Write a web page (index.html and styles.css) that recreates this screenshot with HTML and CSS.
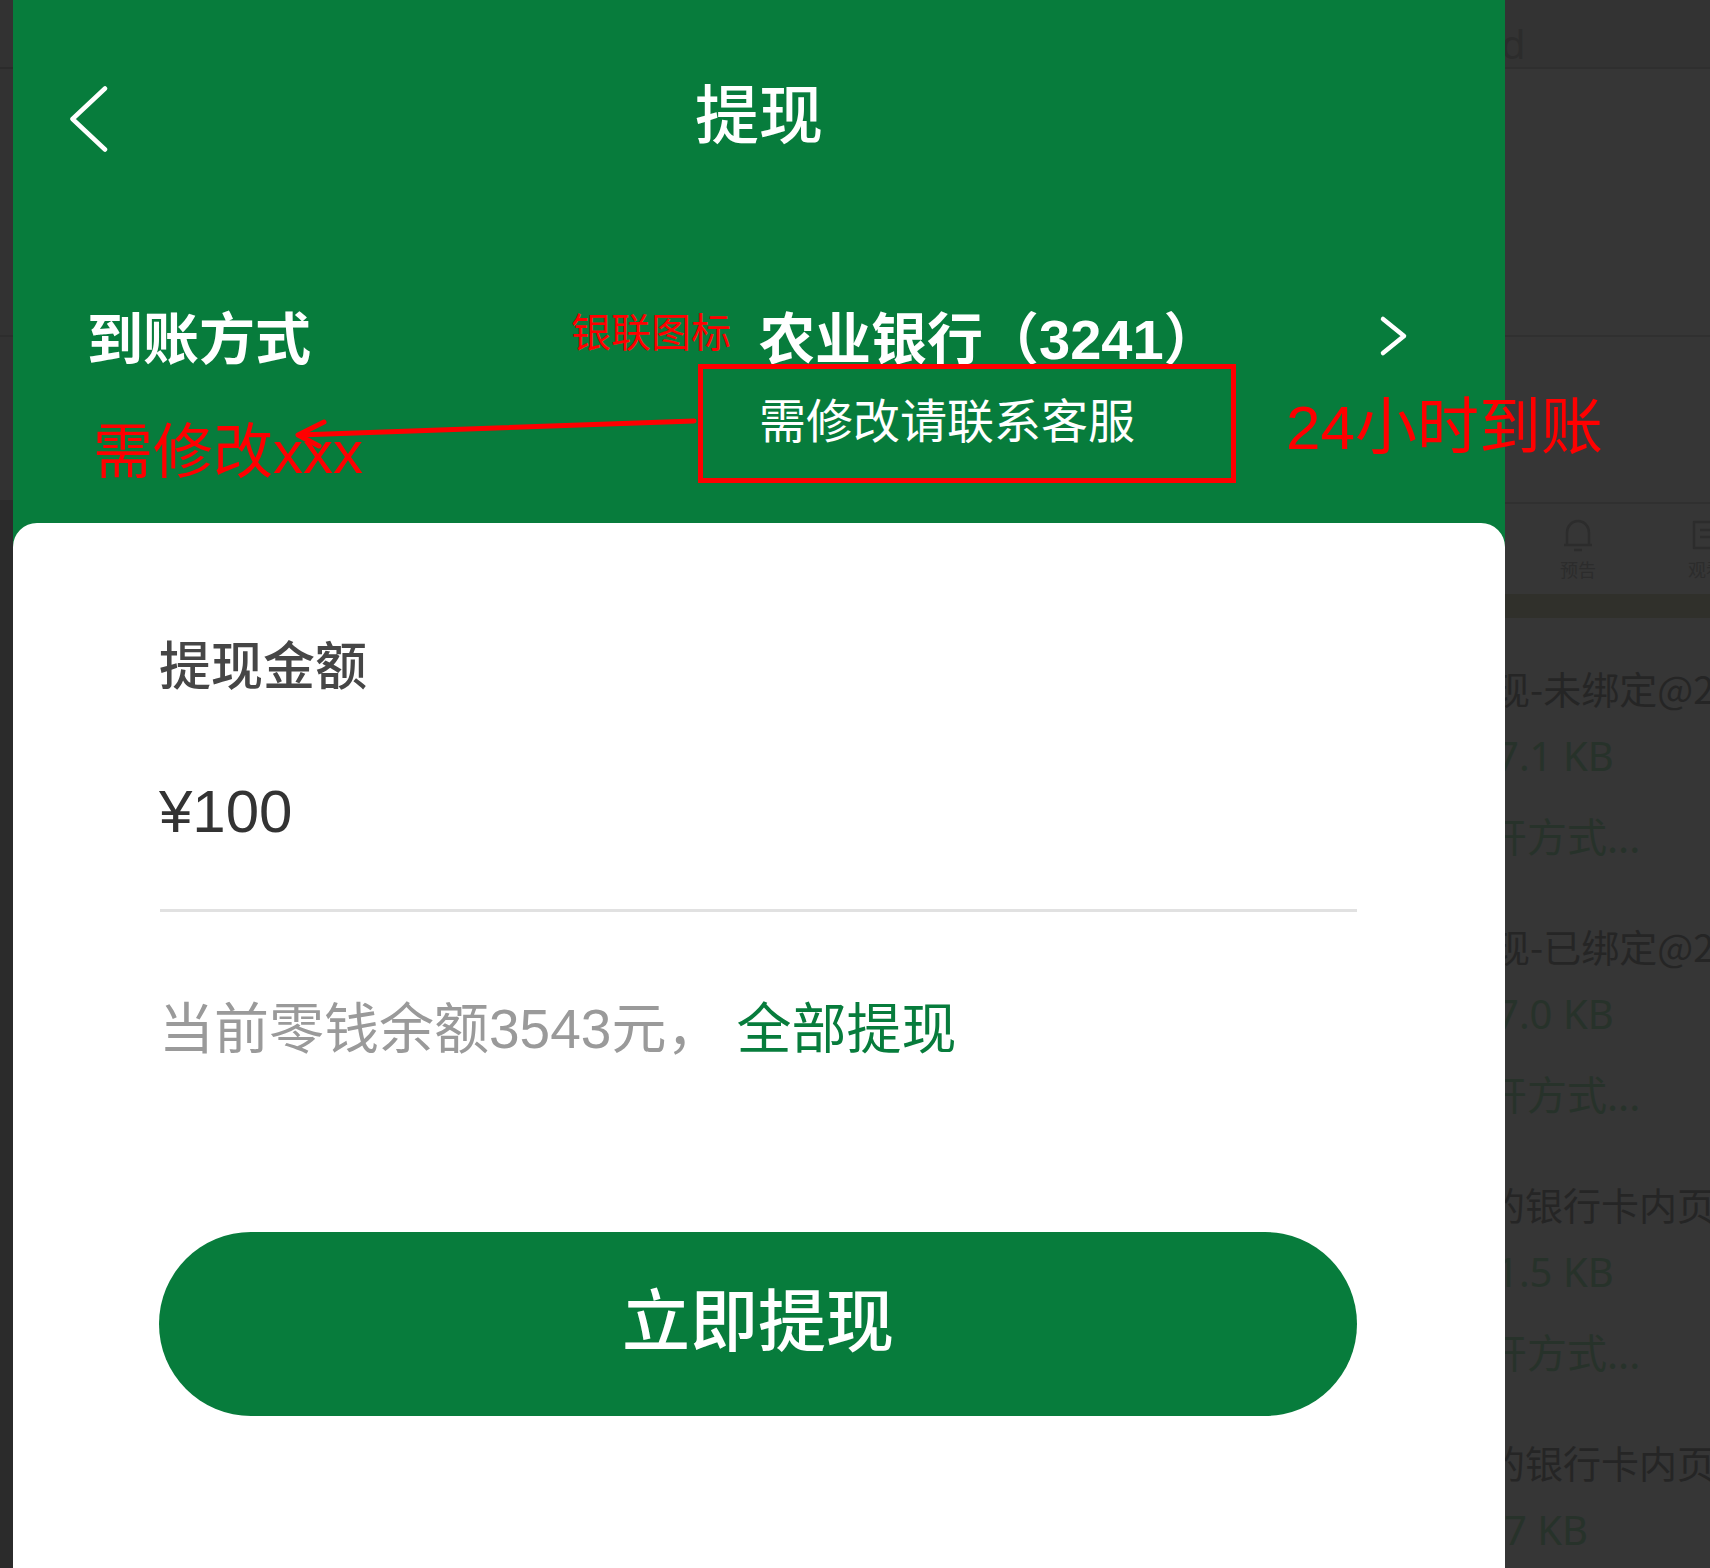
FILE: index.html
```html
<!DOCTYPE html>
<html lang="zh-CN">
<head>
<meta charset="utf-8">
<title>提现</title>
<link rel="stylesheet" href="styles.css">
</head>
<body>
<div class="stage">
  <div class="edge">
    <div class="edge-top"></div>
    <div class="edge-mid"></div>
    <div class="edge-low"></div>
    <div class="edge-bottom"></div>
  </div>

  <main class="phone">
    <header class="nav">
      <button class="back" type="button" aria-label="返回">
        <svg viewBox="0 0 40 66" width="40" height="66"><path d="M36 2.5 L3.5 33 L36 63.5"/></svg>
      </button>
      <h1 class="title">提现</h1>
    </header>

    <section class="method">
      <div class="method-row">
        <span class="method-label">到账方式</span>
        <span class="note note-icon">银联图标</span>
        <span class="bank">农业银行（<span class="lat">3241</span>）</span>
        <svg class="chev" viewBox="0 0 30 42" width="30" height="42"><path d="M5 4 L26 21 L5 38"/></svg>
      </div>
      <div class="method-sub">
        <span class="note note-left">需修改<span class="lat">xxx</span></span>
        <div class="note-box"><span class="bank-sub">需修改请联系客服</span></div>
        <span class="note note-right"><span class="lat">24</span>小时到账</span>
      </div>
      <svg class="note-arrow" viewBox="0 0 1492 297" width="1492" height="297">
        <path class="shaft" d="M286 209 L681 195"/>
        <path class="head" d="M311 196 L285 209 L306 220"/>
      </svg>
    </section>

    <section class="card">
      <h2 class="amount-label">提现金额</h2>
      <div class="amount">¥100</div>
      <div class="divider"></div>
      <p class="balance">当前零钱余额<span class="lat">3543</span>元，<a class="all">全部提现</a></p>
      <button class="submit" type="button">立即提现</button>
    </section>
  </main>

  <aside class="backdrop">
    <div class="bd-top"><span class="bd-d">d</span></div>
    <div class="bd-sec"></div>
    <div class="bd-sec2"></div>
    <div class="bd-tabs">
      <div class="bd-tab">
        <svg viewBox="0 0 32 36" width="32" height="36"><path d="M5 27 L5 15 C5 8 10 3 16 3 C22 3 27 8 27 15 L27 27 Z M2 27 L30 27 M12 32 L20 32"/></svg>
        <span>预告</span>
      </div>
      <div class="bd-tab">
        <svg viewBox="0 0 32 36" width="32" height="36"><path d="M4 4 L28 4 L28 30 L4 30 Z M10 12 L22 12 M10 19 L22 19"/></svg>
        <span>观看</span>
      </div>
    </div>
    <div class="bd-band"></div>
    <ul class="bd-list">
      <li><p class="bd-name n1">现-未绑定@2x.png</p><p class="bd-size s1">7.1 KB</p><p class="bd-open">打开方式...</p></li>
      <li><p class="bd-name n1">现-已绑定@2x.png</p><p class="bd-size s1">7.0 KB</p><p class="bd-open">打开方式...</p></li>
      <li><p class="bd-name n2">的银行卡内页@2x.png</p><p class="bd-size s1">1.5 KB</p><p class="bd-open">打开方式...</p></li>
      <li><p class="bd-name n2">的银行卡内页@2x.png</p><p class="bd-size s2">57 KB</p><p class="bd-open">打开方式...</p></li>
    </ul>
  </aside>
</div>
</body>
</html>
```

FILE: styles.css
```css
* { box-sizing: border-box; margin: 0; padding: 0; }

html, body {
  width: 1710px;
  height: 1568px;
  overflow: hidden;
}

body {
  background: #353535;
  font-family: "Noto Sans CJK SC", "Noto Sans", sans-serif;
}

.lat { font-family: "Liberation Sans", Arial, sans-serif; }

.stage {
  display: flex;
  height: 1568px;
}

/* left sliver of the desktop behind the phone */
.edge {
  flex: 0 0 13px;
  min-width: 0;
  display: flex;
  flex-direction: column;
  background: #323232;
}
.edge > div { flex-shrink: 0; }
.edge-top { height: 69px; border-bottom: 2px solid #2b2b2b; }
.edge-mid { height: 268px; border-bottom: 2px solid #2d2d2d; }
.edge-low { height: 163px; }
.edge-bottom { flex: 1; background: #2b2b2b; }

/* phone screen */
.phone {
  flex: 0 0 1492px;
  width: 1492px;
  min-width: 0;
  position: relative;
  z-index: 1;
  display: flex;
  flex-direction: column;
  background: #077c3c;
}

.nav {
  height: 226px;
  display: grid;
  grid-template-columns: 1fr auto 1fr;
  align-items: center;
}
.back {
  justify-self: start;
  margin-left: 56px;
  margin-top: 12px;
  width: 40px;
  height: 66px;
  display: flex;
  background: none;
  border: 0;
}
.back path, .chev path {
  fill: none;
  stroke: #fff;
  stroke-width: 4.5;
  stroke-linecap: round;
  stroke-linejoin: round;
}
.title {
  font-size: 64px;
  font-weight: 500;
  line-height: 1;
  color: #fff;
  margin-bottom: 6px;
}

.method {
  position: relative;
  height: 297px;
  padding-top: 84px;
}
.method-row {
  display: flex;
  align-items: flex-start;
  height: 54px;
  padding-left: 74px;
  padding-right: 97px;
}
.method-label {
  flex: 0 0 484px;
  margin-top: -3px;
  font-size: 56px;
  font-weight: 700;
  line-height: 1;
  color: #fff;
}
.note {
  flex-shrink: 0;
  color: #ff0000;
  line-height: 1;
  white-space: nowrap;
}
.note-icon { font-size: 40px; }
.bank {
  margin-left: 28px;
  margin-top: -3px;
  font-size: 56px;
  font-weight: 700;
  line-height: 1;
  color: #fff;
  white-space: nowrap;
}
.chev {
  flex-shrink: 0;
  margin-left: auto;
  margin-top: 5px;
}

.method-sub {
  display: flex;
  align-items: flex-start;
  height: 119px;
  padding-left: 80px;
}
.note-left {
  flex: 0 0 605px;
  font-size: 60px;
  margin-top: 53px;
}
.note-box {
  flex: 0 0 538px;
  height: 119px;
  border: 5px solid #ff0000;
  padding: 25px 0 0 56px;
}
.bank-sub {
  display: block;
  font-size: 47px;
  line-height: 1;
  color: #fff;
  white-space: nowrap;
}
.note-right {
  margin-left: 50px;
  margin-top: 27px;
  font-size: 62px;
}

.note-arrow {
  position: absolute;
  left: 0;
  top: 0;
  pointer-events: none;
}
.note-arrow path {
  fill: none;
  stroke: #ff0000;
  stroke-width: 5;
  stroke-linecap: round;
  stroke-linejoin: round;
}

/* white sheet */
.card {
  flex: 1;
  display: flex;
  flex-direction: column;
  align-items: stretch;
  background: #fff;
  border-radius: 24px 24px 0 0;
  padding: 114px 148px 0 146px;
}
.amount-label {
  font-size: 52px;
  font-weight: 500;
  line-height: 1;
  color: #464646;
}
.amount {
  margin-top: 93px;
  font-family: "Liberation Sans", Arial, sans-serif;
  font-size: 60px;
  line-height: 1;
  color: #333;
}
.divider {
  margin-top: 67px;
  margin-left: 1px;
  height: 3px;
  background: #e1e1e1;
}
.balance {
  margin-top: 85px;
  font-size: 55px;
  line-height: 1;
  color: #9a9a9a;
  white-space: nowrap;
}
.all {
  margin-left: 15px;
  color: #077c3c;
}
.submit {
  margin-top: 175px;
  height: 184px;
  padding-bottom: 14px;
  border: 0;
  border-radius: 92px;
  background: #077c3c;
  color: #fff;
  font-family: "Noto Sans CJK SC", sans-serif;
  font-size: 68px;
  font-weight: 500;
  line-height: 1;
}

/* dimmed desktop on the right */
.backdrop {
  flex: 1 1 0;
  min-width: 0;
  display: flex;
  flex-direction: column;
  overflow: hidden;
  background: #363636;
  color: #282828;
}
.backdrop > * { flex-shrink: 0; }
.bd-top {
  height: 69px;
  border-bottom: 2px solid #2f2f2f;
  background: #333;
  overflow: hidden;
}
.bd-d {
  display: block;
  margin: 24px 0 0 -4px;
  font-family: "Noto Sans", sans-serif;
  font-size: 40px;
  line-height: 1;
  color: #2c2c2c;
}
.bd-sec { height: 268px; border-bottom: 2px solid #303030; }
.bd-sec2 { height: 167px; border-bottom: 2px solid #303030; }
.bd-tabs {
  height: 90px;
  display: flex;
  gap: 92px;
  padding: 14px 0 0 55px;
}
.bd-tab {
  flex-shrink: 0;
  display: flex;
  flex-direction: column;
  align-items: center;
  gap: 6px;
  color: #2c2c2c;
  font-size: 18px;
  line-height: 1;
  white-space: nowrap;
}
.bd-tab path {
  fill: none;
  stroke: #2c2c2c;
  stroke-width: 2.5;
  stroke-linejoin: round;
}
.bd-band { height: 24px; background: #30302b; }
.bd-list {
  list-style: none;
  padding-top: 51px;
}
.bd-list li {
  height: 258px;
  display: flex;
  flex-direction: column;
  white-space: nowrap;
}
.bd-name {
  font-size: 38px;
  line-height: 1;
  color: #252525;
}
.n1 { margin-left: -13px; }
.n2 { margin-left: -18px; }
.bd-size {
  margin-top: 29px;
  font-family: "Noto Sans", sans-serif;
  font-size: 40px;
  line-height: 1;
  color: #27322a;
}
.s1 { margin-left: -9px; }
.s2 { margin-left: -24px; }
.bd-open {
  margin-top: 39px;
  margin-left: -58px;
  font-size: 40px;
  line-height: 1;
  color: #27322a;
}
```
